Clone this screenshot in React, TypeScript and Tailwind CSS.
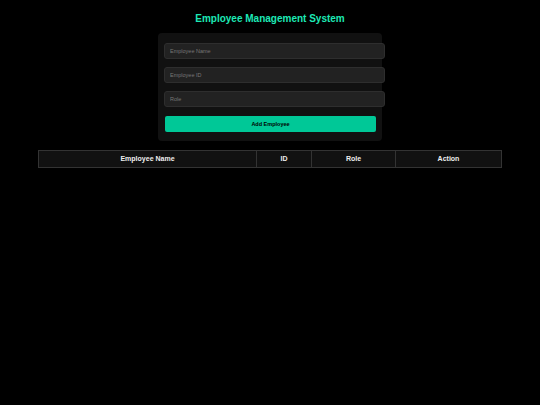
export default function App() {
  return (
    <div className="min-h-[405px] w-[540px] bg-black font-['Liberation_Sans',Arial,sans-serif] pt-[12px]">
      <h1 className="text-center text-[10px] font-bold leading-[14px] text-[#1de9b6]">
        Employee Management System
      </h1>
      <div className="ml-[158px] mt-[7px] flex h-[108px] w-[224px] flex-col rounded-[4px] bg-[#111111] pl-[6px] pt-[10px]">
        <input
          placeholder="Employee Name"
          className="h-[16px] w-[221px] shrink-0 rounded-[3px] border border-[#2e2e2e] bg-[#222222] px-[5px] text-[5.5px] text-white outline-none placeholder:text-[#777]"
        />
        <input
          placeholder="Employee ID"
          className="mt-[8px] h-[16px] w-[221px] shrink-0 rounded-[3px] border border-[#2e2e2e] bg-[#222222] px-[5px] text-[5.5px] text-white outline-none placeholder:text-[#777]"
        />
        <input
          placeholder="Role"
          className="mt-[8px] h-[16px] w-[221px] shrink-0 rounded-[3px] border border-[#2e2e2e] bg-[#222222] px-[5px] text-[5.5px] text-white outline-none placeholder:text-[#777]"
        />
        <button className="ml-px mt-[9px] h-[16px] w-[211px] rounded-[2px] bg-[#00c897] text-[5.5px] font-bold text-black">
          Add Employee
        </button>
      </div>
      <table className="ml-[38px] mt-[9px] w-[464px] border-collapse bg-[#111111] text-[7px] font-bold text-[#eeeeee]">
        <thead>
          <tr className="h-[17px]">
            <th className="w-[218px] border border-[#333]">Employee Name</th>
            <th className="w-[55px] border border-[#333]">ID</th>
            <th className="w-[84px] border border-[#333]">Role</th>
            <th className="border border-[#333]">Action</th>
          </tr>
        </thead>
        <tbody />
      </table>
    </div>
  );
}
